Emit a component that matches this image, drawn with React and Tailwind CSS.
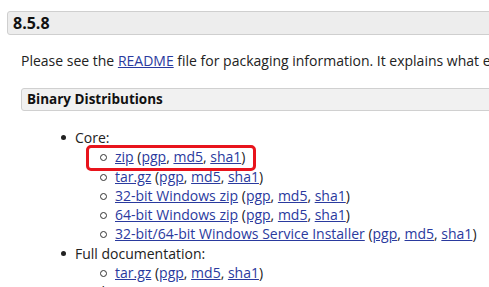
const link = "text-[#2a3a9e] underline";

function Hashes() {
  return (
    <>
      {" ("}
      <a className={link}>pgp</a>
      {", "}
      <a className={link}>md5</a>
      {", "}
      <a className={link}>sha1</a>
      {")"}
    </>
  );
}

function Sub({ children }) {
  return (
    <li className="relative h-[19.3px]">
      <span className="absolute left-[-15px] top-[7px] w-[7px] h-[7px] rounded-full border border-[#333]" />
      {children}
    </li>
  );
}

function Dot() {
  return <span className="absolute left-[-14px] top-[7px] w-[5px] h-[5px] rounded-full bg-[#222]" />;
}

export default function App() {
  return (
    <div className="w-[489px] h-[287px] overflow-hidden bg-white text-[#222] text-[14px] font-['Open_Sans',sans-serif] whitespace-nowrap">
      <div className="pt-[11px] pl-[7px]">
        <h3 className="h-[24px] w-[500px] bg-[#ededed] border border-[#cfcfcf] rounded-l-[3px] pl-[5px] text-[16px] font-bold leading-[22px] text-[#111]">
          8.5.8
        </h3>
      </div>
      <p className="pl-[21px] mt-[16px] leading-[20px]">
        Please see the <a className={link}>README</a> file for packaging information. It explains what e
      </p>
      <div className="pl-[21px] mt-[17px]">
        <h4 className="h-[23px] w-[480px] bg-[#f1f1f1] border border-[#d0d0d0] rounded-l-[3px] pl-[5px] text-[13.5px] font-bold leading-[21px] text-[#111]">
          Binary Distributions
        </h4>
      </div>
      <ul className="pl-[75px] mt-[17px] leading-[19.3px]">
        <li className="relative h-[19.3px]">
          <Dot />
          Core:
        </li>
        <li className="pl-[40px] relative">
          <div className="absolute left-[11px] top-[-2px] w-[170px] h-[26px] border-[3px] border-[#e8141c] rounded-[5px]" />
          <ul>
            <Sub><a className={link}>zip</a><Hashes /></Sub>
            <Sub><a className={link}>tar.gz</a><Hashes /></Sub>
            <Sub><a className={link}>32-bit Windows zip</a><Hashes /></Sub>
            <Sub><a className={link}>64-bit Windows zip</a><Hashes /></Sub>
            <Sub><a className={link}>32-bit/64-bit Windows Service Installer</a><Hashes /></Sub>
          </ul>
        </li>
        <li className="relative h-[19.3px]">
          <Dot />
          Full documentation:
        </li>
        <li className="pl-[40px]">
          <ul>
            <Sub><a className={link}>tar.gz</a><Hashes /></Sub>
          </ul>
        </li>
        <li className="relative h-[19.3px]">
          <Dot />
          Deployer:
        </li>
      </ul>
    </div>
  );
}
